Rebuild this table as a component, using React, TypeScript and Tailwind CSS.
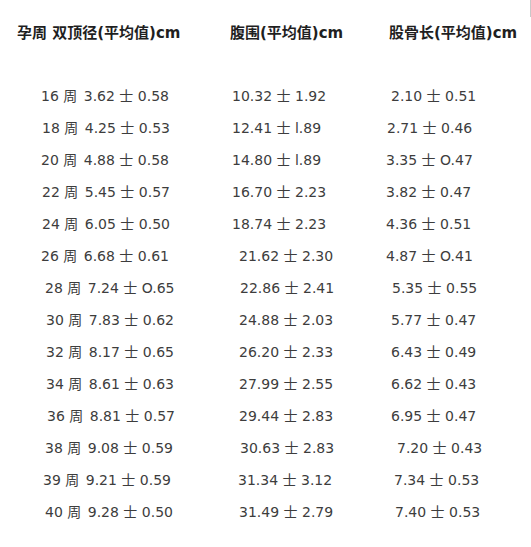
import React from "react";

type Row = {
  week: string;
  bpd: string;
  ac: string;
  fl: string;
  p1: string;
  p2: string;
  p3: string;
};

// 每行的左边距照着原图微调
const rows: Row[] = [
  { week: "16 周", bpd: "3.62 士 0.58", ac: "10.32 士 1.92", fl: "2.10 士 0.51", p1: "pl-[41px]", p2: "pl-[19px]", p3: "pl-[19px]" },
  { week: "18 周", bpd: "4.25 士 0.53", ac: "12.41 士 l.89", fl: "2.71 士 0.46", p1: "pl-[42px]", p2: "pl-[19px]", p3: "pl-[15px]" },
  { week: "20 周", bpd: "4.88 士 0.58", ac: "14.80 士 l.89", fl: "3.35 士 O.47", p1: "pl-[41px]", p2: "pl-[19px]", p3: "pl-[14px]" },
  { week: "22 周", bpd: "5.45 士 0.57", ac: "16.70 士 2.23", fl: "3.82 士 0.47", p1: "pl-[42px]", p2: "pl-[19px]", p3: "pl-[14px]" },
  { week: "24 周", bpd: "6.05 士 0.50", ac: "18.74 士 2.23", fl: "4.36 士 0.51", p1: "pl-[42px]", p2: "pl-[19px]", p3: "pl-[14px]" },
  { week: "26 周", bpd: "6.68 士 0.61", ac: "21.62 士 2.30", fl: "4.87 士 O.41", p1: "pl-[41px]", p2: "pl-[26px]", p3: "pl-[14px]" },
  { week: "28 周", bpd: "7.24 士 O.65", ac: "22.86 士 2.41", fl: "5.35 士 0.55", p1: "pl-[45px]", p2: "pl-[27px]", p3: "pl-[20px]" },
  { week: "30 周", bpd: "7.83 士 0.62", ac: "24.88 士 2.03", fl: "5.77 士 0.47", p1: "pl-[46px]", p2: "pl-[26px]", p3: "pl-[19px]" },
  { week: "32 周", bpd: "8.17 士 0.65", ac: "26.20 士 2.33", fl: "6.43 士 0.49", p1: "pl-[46px]", p2: "pl-[26px]", p3: "pl-[19px]" },
  { week: "34 周", bpd: "8.61 士 0.63", ac: "27.99 士 2.55", fl: "6.62 士 0.43", p1: "pl-[46px]", p2: "pl-[26px]", p3: "pl-[19px]" },
  { week: "36 周", bpd: "8.81 士 0.57", ac: "29.44 士 2.83", fl: "6.95 士 0.47", p1: "pl-[47px]", p2: "pl-[26px]", p3: "pl-[19px]" },
  { week: "38 周", bpd: "9.08 士 0.59", ac: "30.63 士 2.83", fl: "7.20 士 0.43", p1: "pl-[45px]", p2: "pl-[27px]", p3: "pl-[25px]" },
  { week: "39 周", bpd: "9.21 士 0.59", ac: "31.34 士 3.12", fl: "7.34 士 0.53", p1: "pl-[43px]", p2: "pl-[25px]", p3: "pl-[22px]" },
  { week: "40 周", bpd: "9.28 士 0.50", ac: "31.49 士 2.79", fl: "7.40 士 0.53", p1: "pl-[45px]", p2: "pl-[26px]", p3: "pl-[23px]" },
];

const font = "font-['DejaVu_Sans','Noto_Sans_CJK_SC',sans-serif]";

function App() {
  return (
    <div className={`relative w-[531px] h-[547px] bg-white overflow-hidden ${font}`}>
      {/* 右上角截图残留的细线 */}
      <div className="absolute right-0 top-0 w-px h-[17px] bg-[#c8c8c8]" />

      <div className="grid grid-cols-[213px_159px_159px] pt-[21px] leading-[24px] text-[15px] font-bold text-[#1f1f1f] whitespace-nowrap">
        <div className="pl-[17px]">孕周 双顶径(平均值)cm</div>
        <div className="pl-[17px]">腹围(平均值)cm</div>
        <div className="pl-[17px]">股骨长(平均值)cm</div>
      </div>

      <div className="mt-[35px] flex flex-col text-[14px] leading-[32px] text-[#3d3d3d] whitespace-nowrap">
        {rows.map((row) => (
          <div key={row.week} className="grid grid-cols-[213px_159px_159px]">
            <div className={row.p1}>
              <span className="pr-[2px]">{row.week}</span> {row.bpd}
            </div>
            <div className={row.p2}>{row.ac}</div>
            <div className={row.p3}>{row.fl}</div>
          </div>
        ))}
      </div>
    </div>
  );
}

export default App;
